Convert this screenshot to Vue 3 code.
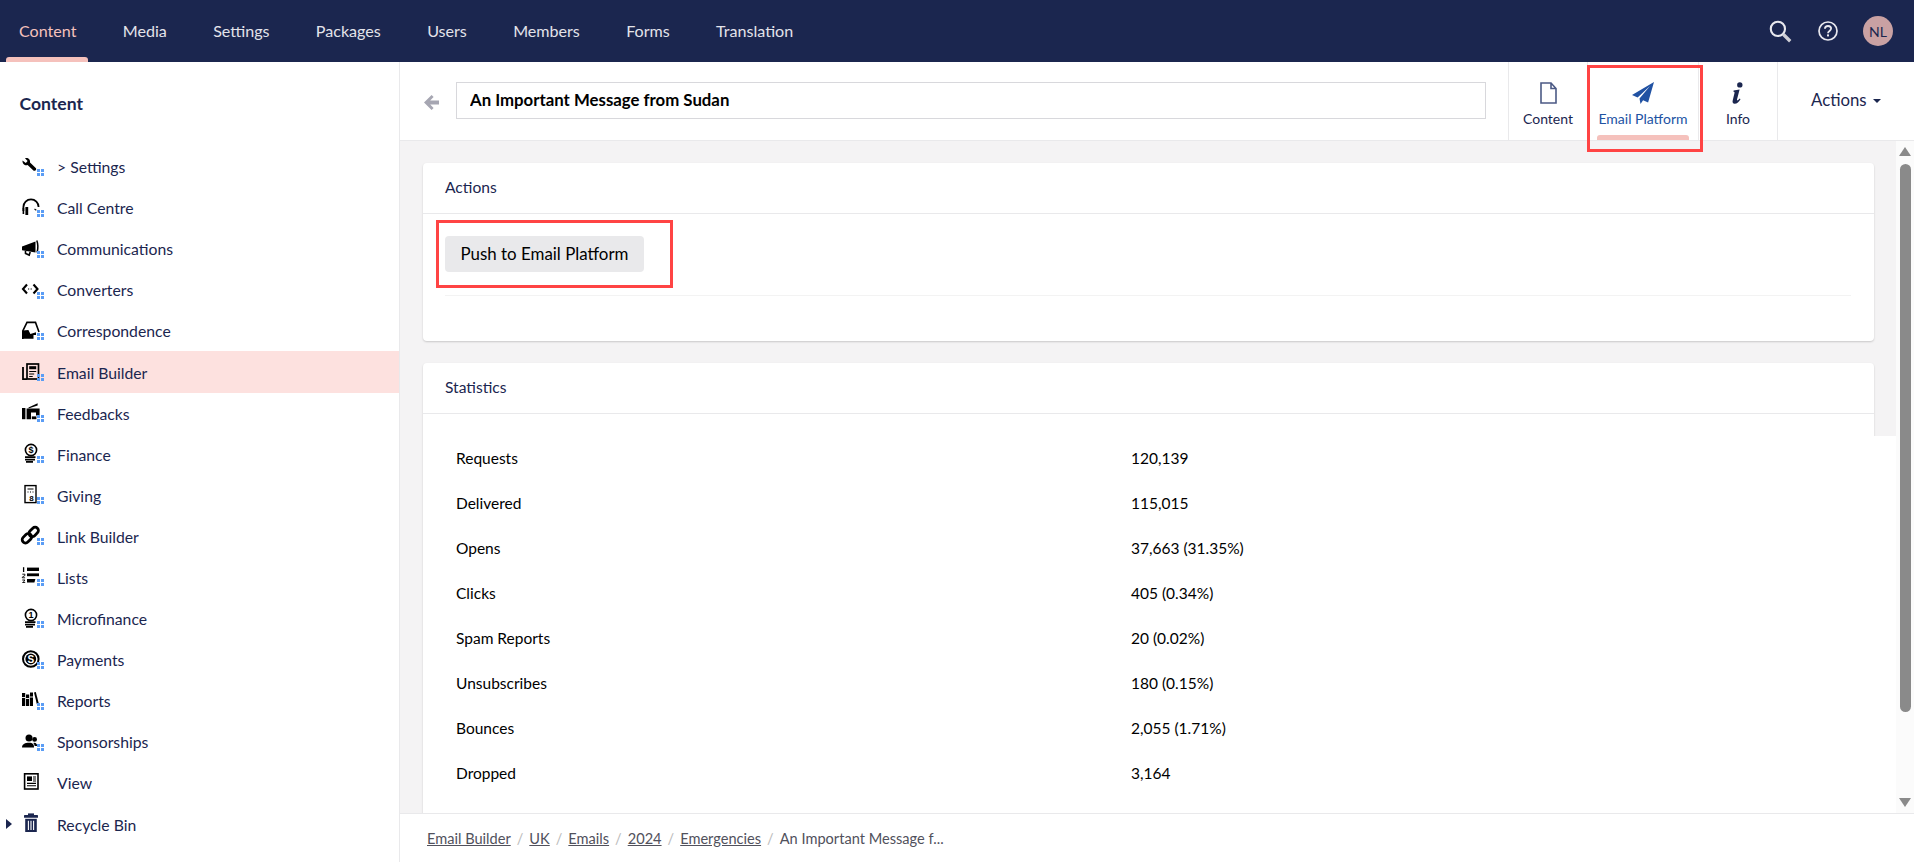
<script setup>
const dots = '<g fill="#5b9df5"><rect x="17" y="14" width="3" height="3"/><rect x="21" y="14" width="3" height="3"/><rect x="17" y="18" width="3" height="3"/><rect x="21" y="18" width="3" height="3"/></g>'

const coins = (mark) => `<circle cx="11" cy="8" r="5.6" fill="none" stroke="#000" stroke-width="1.6"/><text x="11" y="11.2" font-size="9" font-weight="700" text-anchor="middle" font-family="Liberation Sans, sans-serif" fill="#000">${mark}</text><path d="M5 15.2h10.5M5 17.6h10M6 19.8h7" stroke="#000" stroke-width="1.7" fill="none"/>`

const glyphs = {
  wrench: '<path d="M2.5 5.5 5.8 8 7.6 6 5 3.2C8 2.2 10.6 4.6 10 7.4L16 13.2C16.8 14.6 15 16.6 13.4 15.6L7.6 10C5 11 2.2 8.8 2.5 5.5Z" fill="#000"/>',
  headset: '<path d="M3.4 15V11A7.6 7.6 0 0 1 18.6 11" fill="none" stroke="#000" stroke-width="1.8"/><rect x="5.4" y="11" width="2.8" height="8" fill="#000"/><rect x="2.6" y="12" width="1.6" height="6" fill="#000"/><path d="M14.5 13l1.8 1.2" stroke="#000" stroke-width="1.1"/>',
  megaphone: '<path d="M2 9.5 15.5 4.5V15.5L2 13.2Z" fill="#000"/><path d="M16.8 3.5c1.2 3.2 1.2 8.4.3 12" fill="none" stroke="#000" stroke-width="1.5"/><path d="M5.5 14v2.5l3.7 1.6 1-3.2" fill="none" stroke="#000" stroke-width="1.6"/>',
  code: '<path d="M7 6.5 3 11l4 4.5M13.5 6.5l4 4.5-4 4.5" fill="none" stroke="#000" stroke-width="2.1"/><path d="M8 11h1.2M10.6 11h1.2" stroke="#000" stroke-width="1.2"/>',
  letter: '<path d="M2.8 20V12L7 3.4H15.5L19 13" fill="none" stroke="#000" stroke-width="1.6"/><path d="M2.8 11.6 8.4 11 10.4 15l5.6-1.8V16h-2.5v3.8H2.8Z" fill="#000"/>',
  news: '<rect x="7" y="4" width="11.5" height="15" fill="none" stroke="#000" stroke-width="1.7"/><path d="M3 7V19.2H7" fill="none" stroke="#000" stroke-width="1.8"/><rect x="9.2" y="6.2" width="7" height="3" fill="#000"/><path d="M9.2 11.5h7M9.2 14h5M9.2 16.5h3.5" stroke="#000" stroke-width="1.2"/>',
  feedback: '<rect x="2" y="7" width="3.4" height="11.2" fill="#000"/><path d="M6.6 7.4H19.6V14.6H16V11.6H11V18.2H6.6Z" fill="#000"/><path d="M8.5 6.4 17.6 2.2v2.2L8.5 7.6Z" fill="#000"/><rect x="11.8" y="15.4" width="4.6" height="2.8" fill="#000"/>',
  finance: coins('$'),
  giving: '<rect x="5" y="2.6" width="11" height="17" fill="none" stroke="#000" stroke-width="1.4"/><path d="M7.5 6h6M7.5 9h1M10 9h1M12.5 9h1" stroke="#000" stroke-width="1.2"/><text x="11.5" y="17.8" font-size="8" font-weight="700" text-anchor="middle" font-family="Liberation Sans, sans-serif" fill="#000">8</text>',
  link: '<g fill="none" stroke="#000" stroke-width="2.8"><rect x="1.6" y="11" width="10.6" height="6.6" rx="3.3" transform="rotate(-45 6.9 14.3)"/><rect x="8.4" y="4.6" width="10.6" height="6.6" rx="3.3" transform="rotate(-45 13.7 7.9)"/></g>',
  list: '<path d="M3.6 2.2V7" stroke="#000" stroke-width="1.3" fill="none"/><path d="M2.3 9.2h2.6v1.3l-2.6 1.6v.7h2.8" stroke="#000" stroke-width=".9" fill="none"/><path d="M2.3 15h2.6l-1.2 1.3 1.2 1.2H2.3" stroke="#000" stroke-width=".9" fill="none"/><rect x="7" y="2.6" width="12" height="3.4" fill="#000"/><rect x="7" y="8.4" width="12" height="2.8" fill="#000"/><path d="M7 14h8.4l-1 3.6H7Z" fill="#000"/>',
  micro: coins('1'),
  pay: '<circle cx="10.8" cy="11" r="7.8" fill="none" stroke="#000" stroke-width="2"/><circle cx="10.8" cy="11" r="5.4" fill="#000"/><text x="10.8" y="14.6" font-size="10" font-weight="700" text-anchor="middle" font-family="Liberation Sans, sans-serif" fill="#fff">S</text>',
  books: '<g fill="#000"><rect x="2" y="4" width="3.2" height="13"/><rect x="6" y="5.5" width="3.2" height="11.5"/><rect x="10" y="3.5" width="3" height="13.5"/><path d="M14 3.5l1.8-.6 3 11.7-1.9.6Z"/></g><path d="M2 8.5h3.2M6 9.5h3.2M10 8h3" stroke="#fff" stroke-width=".9"/>',
  people: '<circle cx="9" cy="8" r="3.5" fill="#000"/><path d="M2 17.6c0-3.4 3-4.8 7-4.8s5 1.8 5 4.8Z" fill="#000"/><circle cx="14.6" cy="9.4" r="2.4" fill="#000"/><path d="M14.4 12.8c1.6 0 2.8 1.4 2.8 3.2h-2.6c0-1.2-.7-2.2-1.4-2.9Z" fill="#000"/>',
}
const view = '<rect x="4.6" y="2.8" width="13.4" height="15.2" fill="none" stroke="#000" stroke-width="1.6"/><rect x="7" y="5.4" width="5" height="4.6" fill="#000"/><path d="M13 6h3M13 8h3M13 10h3M7 12.4h9M7 14.8h9" stroke="#000" stroke-width="1.1"/>'
const bin = '<path d="M8 1.4h6V3h-6Z" fill="#1b264f"/><rect x="4" y="3" width="14" height="2.8" rx=".6" fill="#1b264f"/><path d="M5.2 6.8h11.6V20H5.2Z" fill="#1b264f"/><path d="M8.4 8.8v9.2M11 8.8v9.2M13.6 8.8v9.2" stroke="#fff" stroke-width="1.1"/>'

const tree = [
  { label: '> Settings', svg: glyphs.wrench + dots },
  { label: 'Call Centre', svg: glyphs.headset + dots },
  { label: 'Communications', svg: glyphs.megaphone + dots },
  { label: 'Converters', svg: glyphs.code + dots },
  { label: 'Correspondence', svg: glyphs.letter + dots },
  { label: 'Email Builder', svg: glyphs.news + dots, active: true },
  { label: 'Feedbacks', svg: glyphs.feedback + dots },
  { label: 'Finance', svg: glyphs.finance + dots },
  { label: 'Giving', svg: glyphs.giving + dots },
  { label: 'Link Builder', svg: glyphs.link + dots },
  { label: 'Lists', svg: glyphs.list + dots },
  { label: 'Microfinance', svg: glyphs.micro + dots },
  { label: 'Payments', svg: glyphs.pay + dots },
  { label: 'Reports', svg: glyphs.books + dots },
  { label: 'Sponsorships', svg: glyphs.people + dots },
  { label: 'View', svg: view },
  { label: 'Recycle Bin', svg: bin, toggle: true },
]

const nav = ['Content', 'Media', 'Settings', 'Packages', 'Users', 'Members', 'Forms', 'Translation']

const stats = [
  ['Requests', '120,139'],
  ['Delivered', '115,015'],
  ['Opens', '37,663 (31.35%)'],
  ['Clicks', '405 (0.34%)'],
  ['Spam Reports', '20 (0.02%)'],
  ['Unsubscribes', '180 (0.15%)'],
  ['Bounces', '2,055 (1.71%)'],
  ['Dropped', '3,164'],
]

const crumbs = ['Email Builder', 'UK', 'Emails', '2024', 'Emergencies']
</script>

<template>
  <div class="app">
    <header class="topbar">
      <nav class="nav">
        <a v-for="(n, i) in nav" :key="n" class="nav-item" :class="{ on: i === 0 }">{{ n }}</a>
      </nav>
      <div class="tools">
        <svg class="tool-search" viewBox="0 0 22 22">
          <circle cx="8.5" cy="8.5" r="6.8" fill="none" stroke="#e8e8ee" stroke-width="2"/>
          <path d="M13.6 13.6 20.3 20.3" stroke="#cfcfd6" stroke-width="3.2"/>
        </svg>
        <svg class="tool-help" viewBox="0 0 20 20">
          <circle cx="10" cy="10" r="9" fill="none" stroke="#e8e8ee" stroke-width="1.7"/>
          <path d="M6.9 7.8C7 5.9 8.3 5 10 5c1.8 0 3.1 1.1 3.1 2.6 0 2.4-3.1 2.3-3.1 4.6" fill="none" stroke="#e8e8ee" stroke-width="1.8"/>
          <rect x="9" y="13.4" width="2" height="2" fill="#e8e8ee"/>
        </svg>
        <div class="avatar">NL</div>
      </div>
    </header>

    <div class="body">
      <aside class="sidebar">
        <h2 class="side-title">Content</h2>
        <ul class="tree">
          <li v-for="t in tree" :key="t.label" class="tree-row" :class="{ active: t.active }">
            <span class="caret-slot"><i v-if="t.toggle" class="tree-caret"></i></span>
            <svg class="tree-icon" viewBox="0 0 24 24" v-html="t.svg"></svg>
            <span class="tree-label">{{ t.label }}</span>
          </li>
        </ul>
      </aside>

      <main class="main">
        <div class="subbar">
          <div class="back">
            <svg viewBox="0 0 15 15" class="back-arrow"><path d="M7.6 0 9.6 2 6.2 5.4H15V9.6H6.2L9.6 13 7.6 15 0 7.5Z" fill="#a6a6b2"/></svg>
          </div>
          <input class="title" value="An Important Message from Sudan" />
          <div class="tabs">
            <div class="tab tab-content">
              <svg class="tab-icon" viewBox="0 0 17 22" width="17" height="22"><path d="M1 1H11L16 6.5V21H1Z M11 1V6.5H16" fill="none" stroke="#4c5a85" stroke-width="1.6"/></svg>
              <span>Content</span>
            </div>
            <div class="tab tab-email on">
              <svg class="tab-icon" viewBox="0 0 22 22" width="22" height="22"><path d="M22 0 0 13l5.6 2.6L18 4 7.5 16.6l1 5.4 2.6-3.8 5 2.2Z" fill="#2152a3"/></svg>
              <span>Email Platform</span>
              <div class="mark-tab"></div>
            </div>
            <div class="tab tab-info">
              <svg class="tab-icon" viewBox="0 0 12 22" width="12" height="22"><circle cx="7.8" cy="2.9" r="2.7" fill="#1b264f"/><path d="M1.6 8.4 7.6 7.4 5 17.6c-.2.9.5 1 1.2.4l1.6-1.5.7.7C7 19.6 5.1 21.8 2.6 21.8.9 21.8.2 20.5.7 18.6L2.5 11c.2-.9-.2-1.2-1.1-1.2Z" fill="#1b264f"/></svg>
              <span>Info</span>
            </div>
            <div class="tab-actions"><span class="actions-label">Actions</span><i class="caret"></i></div>
          </div>
        </div>

        <div class="viewport">
          <div class="scroller">
            <section class="card">
              <div class="card-head">Actions</div>
              <div class="card-body">
                <div class="mark-btn"></div>
                <button class="push">Push to Email Platform</button>
                <div class="rule"></div>
              </div>
            </section>
            <section class="card stats-card">
              <div class="card-head">Statistics</div>
              <div class="stats">
                <div v-for="s in stats" :key="s[0]" class="stat-row">
                  <span>{{ s[0] }}</span><span>{{ s[1] }}</span>
                </div>
              </div>
            </section>
          </div>
          <div class="scrollbar">
            <i class="arrow up"></i>
            <div class="thumb"></div>
            <i class="arrow down"></i>
          </div>
        </div>

        <footer class="crumbs">
          <template v-for="c in crumbs" :key="c">
            <a class="crumb">{{ c }}</a><span class="slash">/</span>
          </template>
          <span class="crumb-last">An Important Message f...</span>
        </footer>
      </main>
    </div>
  </div>
</template>

<style>
html, body { margin: 0; padding: 0; overflow: hidden; }
</style>

<style scoped>
.app {
  width: 1914px;
  height: 862px;
  display: flex;
  flex-direction: column;
  overflow: hidden;
  font-family: Lato, "Open Sans", sans-serif;
  color: #1b264f;
  background: #fff;
}
.topbar {
  height: 62px;
  flex: none;
  background: #1b264f;
  display: flex;
  align-items: center;
  justify-content: space-between;
}
.nav { display: flex; height: 100%; padding-left: 6px; }
.nav-item {
  position: relative;
  display: flex;
  align-items: center;
  height: 62px;
  box-sizing: border-box;
  padding: 0 23.3px 2px 13px;
  margin-right: 10px;
  font-size: 16.1px;
  color: #e3e3ea;
}
.nav-item.on { color: #f5c1bc; }
.nav-item.on::after {
  content: "";
  position: absolute;
  left: 0;
  width: 82px;
  bottom: 0;
  height: 5px;
  border-radius: 3px 3px 0 0;
  background: #f5c1bc;
}
.tools { display: flex; align-items: center; padding-right: 21px; }
.tool-search { width: 23px; height: 23px; margin-right: 26px; }
.tool-help { width: 20px; height: 20px; margin-right: 25px; }
.avatar {
  width: 30px;
  height: 30px;
  border-radius: 50%;
  background: #c9a1a3;
  color: #1b264f;
  font-size: 14px;
  display: flex;
  align-items: center;
  justify-content: center;
}
.body { flex: 1; display: flex; min-height: 0; }
.sidebar {
  width: 399px;
  flex: none;
  border-right: 1px solid #e9e9eb;
  background: #fff;
}
.side-title {
  margin: 0;
  height: 84px;
  line-height: 83px;
  padding-left: 19.5px;
  font-size: 17.6px;
  font-weight: 700;
}
.tree { list-style: none; margin: 0; padding: 0; }
.tree-row {
  height: 41.1px;
  display: flex;
  align-items: center;
  font-size: 15.75px;
}
.tree-row.active { background: #fde1df; }
.caret-slot { width: 20px; flex: none; display: flex; padding-left: 6px; box-sizing: border-box; }
.tree-caret {
  width: 0;
  height: 0;
  border-left: 6px solid #1b264f;
  border-top: 5px solid transparent;
  border-bottom: 5px solid transparent;
}
.tree-icon { width: 24px; height: 24px; flex: none; }
.tree-label { margin-left: 13px; }
.main { flex: 1; min-width: 0; display: flex; flex-direction: column; }
.subbar {
  height: 78px;
  flex: none;
  display: flex;
  align-items: stretch;
  border-bottom: 1px solid #e9e9eb;
  box-sizing: content-box;
}
.back { width: 56px; flex: none; display: flex; align-items: center; padding-left: 24px; box-sizing: border-box; }
.back-arrow { width: 15px; height: 15px; margin-top: 3px; }
.title {
  width: 1030px;
  height: 37px;
  margin-top: 20px;
  box-sizing: border-box;
  border: 1px solid #d8d8dc;
  padding: 0 13px 2px;
  font: 700 16.8px Lato, sans-serif;
  color: #000;
  outline: none;
}
.tabs { margin-left: 22px; display: flex; flex: 1; }
.tab {
  position: relative;
  flex: none;
  display: flex;
  flex-direction: column;
  align-items: center;
  border-left: 1px solid #e9e9eb;
  box-sizing: border-box;
  font-size: 14px;
  padding-top: 20px;
}
.tab-icon { display: block; height: 22px; margin-bottom: 6px; }
.tab-content { width: 79px; }
.tab-email { width: 111px; color: #2152a3; }
.tab-info { width: 79px; }
.tab-email::after {
  content: "";
  position: absolute;
  left: 9px;
  width: 92px;
  bottom: 0;
  height: 5px;
  border-radius: 3px 3px 0 0;
  background: #f5c1bc;
}
.tab-actions {
  flex: 1;
  border-left: 1px solid #e9e9eb;
  display: flex;
  align-items: center;
  padding: 0 0 3px 33px;
  font-size: 16.8px;
  gap: 6px;
}
.caret {
  width: 0;
  height: 0;
  margin-top: 3px;
  border-top: 4px solid #1b264f;
  border-left: 4px solid transparent;
  border-right: 4px solid transparent;
}
.mark-tab {
  position: absolute;
  top: 3px;
  left: -1px;
  width: 116px;
  height: 87px;
  box-sizing: border-box;
  border: 3px solid #ff4444;
  z-index: 2;
  pointer-events: none;
}
.viewport { flex: 1; min-height: 0; display: flex; background: #f4f3f4; }
.scroller {
  flex: 1;
  min-width: 0;
  overflow: hidden;
  padding: 22px 22px 0 23px;
}
.card {
  position: relative;
  background: #fff;
  border-radius: 4px;
  box-shadow: 0 1px 2px rgba(0, 0, 0, .18);
}
.card-head {
  height: 50px;
  line-height: 49px;
  padding-left: 22px;
  font-size: 15.6px;
  border-bottom: 1px solid #e9e9eb;
}
.card-body { position: relative; padding: 22px 23px 45px 22px; }
.push {
  display: block;
  height: 36px;
  width: 199px;
  padding: 0 0 2px;
  border: 0;
  border-radius: 4px;
  background: #e9e9eb;
  color: #000;
  font: 16.9px Lato, sans-serif;
}
.rule { margin-top: 23px; height: 1px; background: #f3f3f3; }
.mark-btn {
  position: absolute;
  left: 13px;
  top: 6px;
  width: 237px;
  height: 68px;
  box-sizing: border-box;
  border: 3px solid #ff4444;
}
.stats-card { margin-top: 22px; }
.stats { position: relative; padding: 21px 0 41px 33px; color: #000; font-size: 15.5px; }
.stats::after {
  content: "";
  position: absolute;
  left: 100%;
  top: 22px;
  bottom: 0;
  width: 22px;
  background: #fff;
}
.stat-row {
  display: grid;
  grid-template-columns: 675px 1fr;
  height: 45px;
  align-items: center;
}
.scrollbar {
  width: 18px;
  flex: none;
  background: #fbfbfb;
  display: flex;
  flex-direction: column;
  align-items: center;
  padding-top: 6px;
  box-sizing: border-box;
}
.thumb { width: 11px; height: 548px; border-radius: 6px; background: #8a8a8a; margin: 8px 0 86px; }
.arrow { width: 0; height: 0; border-left: 6.5px solid transparent; border-right: 6.5px solid transparent; }
.arrow.up { border-bottom: 9px solid #8a8a8a; }
.arrow.down { border-top: 9px solid #8a8a8a; }
.crumbs {
  height: 48px;
  flex: none;
  border-top: 1px solid #e9e9eb;
  display: flex;
  align-items: center;
  padding-left: 27px;
  font-size: 14.6px;
  color: #51515c;
}
.crumb { text-decoration: underline; }
.slash { color: #bbb; margin: 0 6px; }
</style>
